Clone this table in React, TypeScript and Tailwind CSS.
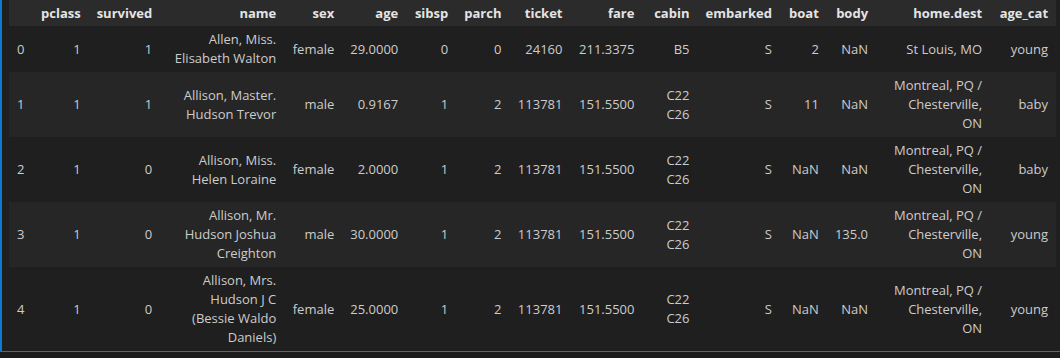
const columns = [
  { key: "", width: 24 },
  { key: "pclass", width: 55 },
  { key: "survived", width: 71 },
  { key: "name", width: 124 },
  { key: "sex", width: 58 },
  { key: "age", width: 64 },
  { key: "sibsp", width: 50 },
  { key: "parch", width: 52 },
  { key: "ticket", width: 61 },
  { key: "fare", width: 72 },
  { key: "cabin", width: 55 },
  { key: "embarked", width: 81 },
  { key: "boat", width: 47 },
  { key: "body", width: 49 },
  { key: "home.dest", width: 114 },
  { key: "age_cat", width: 66 },
];

// each cell is a list of lines, wrapped the way the notebook renders them
const rows: string[][][] = [
  [["0"], ["1"], ["1"], ["Allen, Miss.", "Elisabeth Walton"], ["female"], ["29.0000"], ["0"], ["0"], ["24160"], ["211.3375"], ["B5"], ["S"], ["2"], ["NaN"], ["St Louis, MO"], ["young"]],
  [["1"], ["1"], ["1"], ["Allison, Master.", "Hudson Trevor"], ["male"], ["0.9167"], ["1"], ["2"], ["113781"], ["151.5500"], ["C22", "C26"], ["S"], ["11"], ["NaN"], ["Montreal, PQ /", "Chesterville,", "ON"], ["baby"]],
  [["2"], ["1"], ["0"], ["Allison, Miss.", "Helen Loraine"], ["female"], ["2.0000"], ["1"], ["2"], ["113781"], ["151.5500"], ["C22", "C26"], ["S"], ["NaN"], ["NaN"], ["Montreal, PQ /", "Chesterville,", "ON"], ["baby"]],
  [["3"], ["1"], ["0"], ["Allison, Mr.", "Hudson Joshua", "Creighton"], ["male"], ["30.0000"], ["1"], ["2"], ["113781"], ["151.5500"], ["C22", "C26"], ["S"], ["NaN"], ["135.0"], ["Montreal, PQ /", "Chesterville,", "ON"], ["young"]],
  [["4"], ["1"], ["0"], ["Allison, Mrs.", "Hudson J C", "(Bessie Waldo", "Daniels)"], ["female"], ["25.0000"], ["1"], ["2"], ["113781"], ["151.5500"], ["C22", "C26"], ["S"], ["NaN"], ["NaN"], ["Montreal, PQ /", "Chesterville,", "ON"], ["young"]],
];

const rowHeights = ["h-[46px]", "h-[65px]", "h-[65px]", "h-[65px]", "h-[84px]"];

export default function App() {
  return (
    <div
      className="w-[1060px] h-[358px] bg-[#1c1c1c] overflow-hidden text-[13px] leading-[19px]"
      style={{ fontFamily: '"Segoe UI", "Open Sans", sans-serif' }}
    >
      <div className="h-[352px] bg-[#1f1f1f] border-l-2 border-b border-[#0e7ad3] pl-[7px]">
        <table className="table-fixed border-collapse">
          <colgroup>
            {columns.map((c, i) => (
              <col key={i} style={{ width: c.width }} />
            ))}
          </colgroup>
          <thead>
            <tr className="h-[26px] bg-[#2b2b2b]">
              {columns.map((c, i) => (
                <th key={i} className="px-2 text-right font-bold text-[#e4e4e4] whitespace-nowrap">
                  {c.key}
                </th>
              ))}
            </tr>
          </thead>
          <tbody>
            {rows.map((row, r) => (
              <tr key={r} className={`${rowHeights[r]} ${r % 2 === 1 ? "bg-[#262626]" : "bg-[#1f1f1f]"}`}>
                {row.map((lines, i) => (
                  <td
                    key={i}
                    className={`px-2 align-middle whitespace-nowrap text-[#cccccc] ${i === 0 ? "text-left" : "text-right"}`}
                  >
                    {lines.map((l, j) => (
                      <div key={j}>{l}</div>
                    ))}
                  </td>
                ))}
              </tr>
            ))}
          </tbody>
        </table>
      </div>
    </div>
  );
}
